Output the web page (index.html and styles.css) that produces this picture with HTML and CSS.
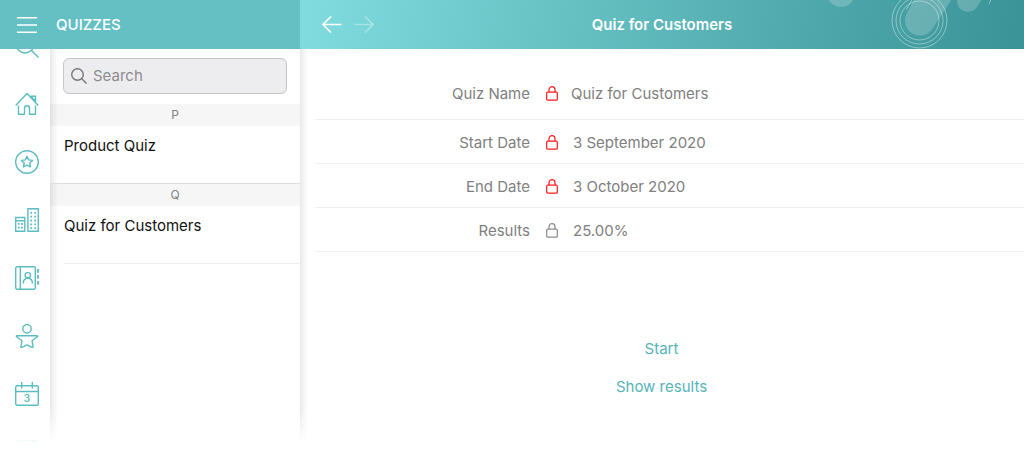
FILE: index.html
```html
<!DOCTYPE html>
<html lang="en">
<head>
<meta charset="utf-8">
<meta name="viewport" content="width=device-width, initial-scale=1">
<title>Quizzes</title>
<link rel="stylesheet" href="styles.css">
</head>
<body>
<div class="app">
  <header class="list-header">
    <button class="icon-button" type="button" aria-label="Menu">
      <svg class="menu-icon" width="20" height="16" viewBox="0 0 20 16"><path d="M0 .8h20M0 8h20M0 15.200h20"/></svg>
    </button>
    <h1 class="list-title">QUIZZES</h1>
  </header>

  <header class="detail-header">
    <svg class="header-art" width="200" height="49" viewBox="0 0 200 49" aria-hidden="true">
      <g class="art-fill">
        <circle cx="17" cy="-7" r="14"/>
        <path d="M92 -4 L83 13 A15 15 0 0 0 109 28 L130 -4z"/>
        <path d="M134 -4 L133 2 A11 11 0 0 0 153 7 L160 -4z"/>
      </g>
      <g class="art-line">
        <circle cx="95.500" cy="20.500" r="27.500"/>
        <circle cx="95.500" cy="20.500" r="23.500"/>
        <circle cx="95.500" cy="20.500" r="19.500"/>
        <path d="M82 10 L89 -2M165 4 L168 -3"/>
      </g>
    </svg>
    <div class="history">
      <button class="icon-button" type="button" aria-label="Back">
        <svg class="arrow-icon" width="20" height="18" viewBox="0 0 20 18"><path d="M19.500 8.500H1M9 .5L1 8.500l8 8"/></svg>
      </button>
      <button class="icon-button" type="button" aria-label="Forward" disabled>
        <svg class="arrow-icon" width="20" height="18" viewBox="0 0 20 18"><path d="M.5 8.500H19M11 .5l8 8-8 8"/></svg>
      </button>
    </div>
    <h2 class="detail-title">Quiz for Customers</h2>
  </header>

  <nav class="rail" aria-label="Sections">
    <div class="rail-items">
      <button class="icon-button" type="button" aria-label="Search"><svg class="rail-icon" viewBox="0 0 24 24"><circle cx="10" cy="10" r="9"/><path d="M16.500 16.500l7 7"/></svg></button>
      <button class="icon-button" type="button" aria-label="Home"><svg class="rail-icon" viewBox="0 0 24 24"><path d="M.7 13.500L12 1.500l11.300 12M15.500 4.200h5v6M16 4.500l4.500 4.500M3.500 13.500v8.800h6v-6a2.500 2.500 0 0 1 5 0v6h6v-8.800"/></svg></button>
      <button class="icon-button" type="button" aria-label="Favourites"><svg class="rail-icon" viewBox="0 0 24 24"><circle cx="12" cy="12" r="11.300"/><path d="M12 6.400l1.700 3.500 3.900.5-2.800 2.700.7 3.800-3.500-1.800-3.500 1.800.7-3.800-2.800-2.700 3.900-.5z"/></svg></button>
      <button class="icon-button" type="button" aria-label="Companies"><svg class="rail-icon" viewBox="0 0 24 24"><path d="M.7 9.500h9.100v13.800H.7zM.7 12.800h9.100M12.900.7h10.400v22.600H12.900z"/><path class="windows" d="M3.800 15v7M6.900 15v7M16.200 4v17M20.200 4v17"/></svg></button>
      <button class="icon-button" type="button" aria-label="Contacts"><svg class="rail-icon" viewBox="0 0 24 24"><rect x=".7" y=".7" width="19.600" height="22.600" rx="1.500"/><path d="M5.300 1v22M8.200 17.500c0-3.500 1.500-5.300 4.600-5.300s4.600 1.800 4.600 5.300"/><circle cx="12.800" cy="9.300" r="2.700"/><path class="tabs" d="M23 3v3.700M23 9v3.700M23 15v3.700"/></svg></button>
      <button class="icon-button" type="button" aria-label="People"><svg class="rail-icon" viewBox="0 0 24 24"><circle cx="12" cy="4.800" r="4.200"/><path d="M2 11.700h20c.8 0 .9.600.4 1l-5.400 4 1.100 6c0 .8-.5.900-1 .6L12 20.800l-5.100 2.500c-.5.300-1 .2-1-.6l1.100-6-5.400-4c-.5-.4-.4-1 .4-1z"/></svg></button>
      <button class="icon-button" type="button" aria-label="Calendar, day 3"><svg class="rail-icon" viewBox="0 0 24 24"><rect x=".7" y="3.700" width="22.600" height="19.600" rx="1.500"/><path d="M.7 9.500h22.600M6.700 0v6.500M17.300 0v6.500"/><text x="12" y="20">3</text></svg></button>
      <button class="icon-button" type="button" aria-label="Documents"><svg class="rail-icon" viewBox="0 0 24 24"><rect x="1.500" y=".7" width="21" height="22.600" rx="1"/></svg></button>
    </div>
  </nav>

  <aside class="list">
    <label class="search">
      <svg class="search-icon" width="16" height="16" viewBox="0 0 16 16" aria-hidden="true"><circle cx="6.500" cy="6.500" r="5.800"/><path d="M10.800 10.800l4.700 4.700"/></svg>
      <input class="search-input" type="text" placeholder="Search" aria-label="Search">
    </label>
    <h3 class="group">P</h3>
    <a class="entry" href="#">Product Quiz</a>
    <h3 class="group ruled">Q</h3>
    <a class="entry last" href="#">Quiz for Customers</a>
  </aside>

  <main class="detail">
    <dl class="fields">
      <div class="field name-field">
        <dt>Quiz Name</dt>
        <dd><svg class="lock required" width="12" height="15" viewBox="0 0 12 15"><rect x=".7" y="6.200" width="10.600" height="8" rx="1"/><path d="M3 6V3.700a3 3 0 0 1 6 0V6"/></svg>Quiz for Customers</dd>
      </div>
      <div class="field">
        <dt>Start Date</dt>
        <dd><svg class="lock required" width="12" height="15" viewBox="0 0 12 15"><rect x=".7" y="6.200" width="10.600" height="8" rx="1"/><path d="M3 6V3.700a3 3 0 0 1 6 0V6"/></svg>3 September 2020</dd>
      </div>
      <div class="field">
        <dt>End Date</dt>
        <dd><svg class="lock required" width="12" height="15" viewBox="0 0 12 15"><rect x=".7" y="6.200" width="10.600" height="8" rx="1"/><path d="M3 6V3.700a3 3 0 0 1 6 0V6"/></svg>3 October 2020</dd>
      </div>
      <div class="field">
        <dt>Results</dt>
        <dd><svg class="lock" width="12" height="15" viewBox="0 0 12 15"><rect x=".7" y="6.200" width="10.600" height="8" rx="1"/><path d="M3 6V3.700a3 3 0 0 1 6 0V6"/></svg>25.00%</dd>
      </div>
    </dl>
    <div class="actions">
      <button class="action" type="button">Start</button>
      <button class="action" type="button">Show results</button>
    </div>
  </main>
  <div class="fade"></div>
</div>
</body>
</html>
```
FILE: styles.css
```css
* {
  box-sizing: border-box;
}

body {
  margin: 0;
  background: #fff;
  color: #111;
  font: 15px/20px Inter, "Liberation Sans", sans-serif;
}

h1, h2, h3, dl, dd {
  margin: 0;
}

button {
  padding: 0;
  border: 0;
  background: none;
  font: inherit;
  cursor: pointer;
}

svg {
  display: block;
  fill: none;
}

.app {
  position: relative;
  display: grid;
  grid-template-columns: 50px 250px 1fr;
  grid-template-rows: 49px 1fr;
  height: 100vh;
  overflow: hidden;
}

.list-header {
  grid-column: span 2;
  display: flex;
  align-items: center;
  gap: 19px;
  padding-left: 17px;
  background: #65c0c4;
  color: #fff;
}

.menu-icon {
  stroke: #fff;
  stroke-width: 1.4;
}

.list-title {
  font-size: 15px;
  font-weight: 500;
}

.detail-header {
  position: relative;
  display: grid;
  grid-template-columns: 1fr auto 1fr;
  align-items: center;
  padding: 0 22px;
  background: linear-gradient(100deg, #80dcde, #3a9396);
  color: #fff;
  overflow: hidden;
}

.header-art {
  position: absolute;
  top: 0;
  right: 0;
}

.art-fill {
  fill: #fff;
  fill-opacity: 0.2;
}

.art-line {
  stroke: #fff;
  stroke-opacity: 0.4;
}

.history {
  display: flex;
  gap: 12px;
}

.arrow-icon {
  stroke: #fff;
  stroke-width: 1.6;
}

.icon-button:disabled {
  opacity: 0.35;
}

.detail-title {
  font-size: 15px;
  font-weight: 600;
}

.rail {
  min-height: 0;
  overflow: hidden;
}

.rail-items {
  display: flex;
  flex-direction: column;
  align-items: center;
  gap: 34px;
  margin-top: -15px;
  padding-left: 4px;
}

.rail-icon {
  width: 24px;
  height: 24px;
  stroke: #5cbdc1;
  stroke-width: 1.4;
  stroke-linejoin: round;
}

.rail-icon .windows {
  stroke-width: 1.8;
  stroke-dasharray: 1.8 2;
}

.rail-icon .tabs {
  stroke-width: 1.8;
}

.rail-icon text {
  fill: #5cbdc1;
  stroke: none;
  font-size: 10px;
  font-weight: 600;
  text-anchor: middle;
}

.list,
.detail {
  min-height: 0;
  background: linear-gradient(90deg, #e9e9e9, #f2f2f2 3px, #fff 8px);
}

.search {
  display: flex;
  align-items: center;
  gap: 6px;
  height: 36px;
  margin: 9px 13px 10px;
  padding: 0 7px;
  border: 1px solid #c6c6c8;
  border-radius: 6px;
  background: #ededef;
}

.search-icon {
  flex: none;
  stroke: #77777a;
  stroke-width: 1.4;
}

.search-input {
  flex: 1;
  min-width: 0;
  padding: 0;
  border: 0;
  outline: 0;
  background: none;
  font: inherit;
}

.search-input::placeholder {
  color: #8c8c90;
}

.group {
  height: 22px;
  background: rgba(0, 0, 0, 0.035);
  color: #808080;
  font-size: 12px;
  font-weight: 400;
  line-height: 22px;
  text-align: center;
}

.ruled {
  height: 23px;
  border-top: 1px solid #dedede;
}

.entry {
  display: block;
  height: 57px;
  margin-left: 14px;
  padding-top: 10px;
  color: #111;
  text-decoration: none;
}

.last {
  height: 58px;
  border-bottom: 1px solid #f0f0f0;
}

.detail {
  padding-left: 15px;
}

.fields {
  padding-top: 19px;
  color: #808080;
}

.field {
  display: grid;
  grid-template-columns: 215px 1fr;
  align-items: center;
  gap: 16px;
  height: 44px;
  padding-top: 2px;
  border-bottom: 1px solid #f0f0f0;
}

.name-field {
  height: 52px;
  padding-top: 0;
}

.field dt {
  text-align: right;
}

.field dd {
  display: flex;
  align-items: center;
  gap: 15px;
}

.name-field dd {
  gap: 13px;
}

.lock {
  stroke: #8a8a8a;
  stroke-width: 1.2;
}

.required {
  stroke: #ff1a1a;
}

.actions {
  display: flex;
  flex-direction: column;
  align-items: center;
  gap: 18px;
  margin-top: 87px;
  padding-right: 16px;
}

.action {
  color: #56b5b9;
}

.fade {
  position: absolute;
  right: 0;
  bottom: 0;
  left: 0;
  height: 40px;
  background: linear-gradient(rgba(255, 255, 255, 0), #fff 34px);
  pointer-events: none;
}
```
